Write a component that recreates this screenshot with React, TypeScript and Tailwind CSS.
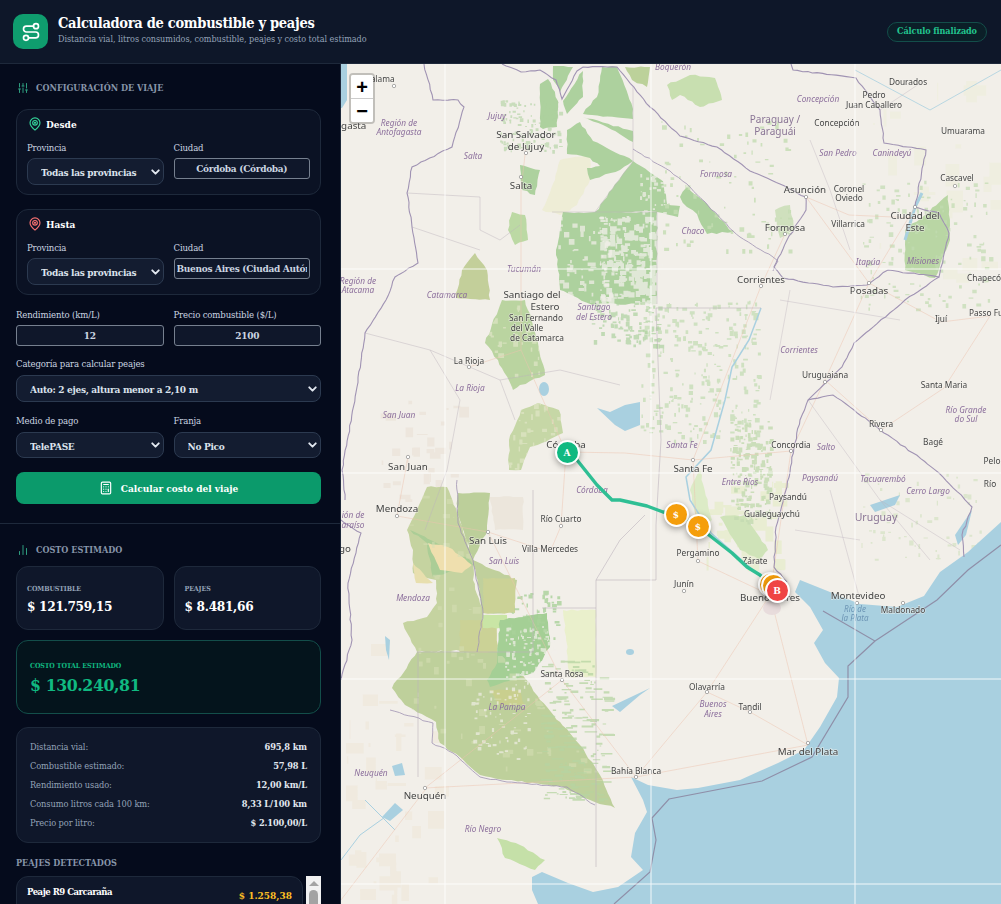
import { Calculator, ChartNoAxesColumn, ChevronDown, Route, SlidersVertical } from 'lucide-react';

type Lbl = [string, number, number, number?];

const BIG = 9.8;
const SM = 8.3;

// city labels: text, x, y, size
const cities: Lbl[] = [
  ['Calama', 380, 82, SM], ['agasta', 351, 129, BIG], ['San Salvador', 526, 138, BIG], ['de Jujuy', 526, 150, BIG],
  ['Salta', 521, 189, BIG], ['Dourados', 908, 85, SM], ['Pedro', 874, 98, SM], ['Juan Caballero', 874, 108, SM],
  ['Concepción', 837, 126, SM], ['Umuarama', 963, 134, SM], ['Cascavel', 957, 181, SM], ['Asunción', 805, 193, BIG],
  ['Coronel', 849, 192, SM], ['Oviedo', 849, 201, SM], ['Villarrica', 848, 227, SM], ['Ciudad del', 915, 219, BIG],
  ['Este', 915, 231, BIG], ['Formosa', 785, 231, BIG], ['Corrientes', 761, 283, BIG], ['Posadas', 869, 294, BIG],
  ['Chapecó', 984, 281, SM], ['Santiago del', 532, 298, BIG], ['Estero', 545, 310, BIG], ['San Fernando', 536, 321, SM],
  ['del Valle', 527, 331, SM], ['de Catamarca', 537, 341, SM], ['La Rioja', 469, 364, SM], ['Ijuí', 941, 322, SM],
  ['Passo Fu', 986, 316, SM], ['Uruguaiana', 825, 378, SM], ['Santa Maria', 944, 388, SM], ['Rivera', 881, 427, SM],
  ['Bagé', 933, 445, SM], ['Córdoba', 566, 448, BIG], ['Concordia', 791, 448, SM], ['Pelo', 992, 464, SM],
  ['Santa Fe', 693, 472, BIG], ['San Juan', 408, 470, BIG], ['Río', 990, 487, SM], ['Paysandú', 788, 500, SM],
  ['Mendoza', 397, 512, BIG], ['Gualeguaychú', 772, 517, SM], ['Río Cuarto', 561, 522, SM], ['San Luis', 488, 544, BIG],
  ['go', 345, 552, BIG], ['Villa Mercedes', 550, 552, SM], ['Pergamino', 698, 556, SM], ['Zárate', 755, 564, SM],
  ['Junín', 684, 587, SM], ['Buenos Aires', 770, 601, BIG], ['Montevideo', 858, 599, BIG], ['Maldonado', 903, 613, SM],
  ['Santa Rosa', 562, 677, SM], ['Olavarría', 707, 690, SM], ['Tandil', 750, 710, SM], ['Mar del Plata', 808, 755, BIG],
  ['Bahía Blanca', 636, 774, SM], ['Neuquén', 425, 799, BIG],
];

// province names, set in italics
const regions: Lbl[] = [
  ['Boquerón', 673, 70], ['Concepción', 818, 102], ['Jujuy', 497, 119], ['Región de', 399, 126], ['Antofagasta', 399, 135],
  ['San Pedro', 838, 156], ['Canindeyú', 892, 156], ['Salta', 473, 159], ['Formosa', 716, 177], ['Chaco', 693, 234],
  ['Itapúa', 868, 265], ['Misiones', 923, 264], ['Tucumán', 524, 272], ['Región de', 358, 284], ['Atacama', 358, 293],
  ['Catamarca', 447, 298], ['Santiago', 594, 310], ['del Estero', 594, 320], ['Corrientes', 799, 353], ['La Rioja', 470, 391],
  ['Río Grande', 966, 413], ['do Sul', 966, 422], ['San Juan', 399, 418], ['Santa Fe', 682, 448], ['Salto', 826, 450],
  ['Entre Ríos', 740, 485], ['Paysandú', 820, 481], ['Tacuarembó', 883, 482], ['Cerro Largo', 928, 494], ['Córdoba', 592, 493],
  ['ión de', 353, 518], ['araíso', 353, 528], ['San Luis', 504, 564], ['Mendoza', 413, 601], ['La Pampa', 507, 710],
  ['Buenos', 713, 707], ['Aires', 713, 717], ['Neuquén', 371, 776], ['Río Negro', 483, 832],
];

const dots: [number, number][] = [
  [394, 86], [526, 153], [521, 177], [806, 197], [785, 234], [761, 286], [869, 283], [408, 457], [566, 458], [693, 460],
  [397, 516], [488, 532], [561, 526], [698, 561], [684, 591], [469, 367], [825, 382], [791, 451], [562, 680], [707, 692],
  [750, 712], [808, 743], [636, 777], [425, 788], [903, 603], [857, 603], [955, 186], [915, 207], [881, 430],
];

const HILLS = '502 300 525 300 538 343 545 375 520 385 513 390 498 360 485 343';
const CORDOBA = '509 440 521 410 538 403 559 410 563 433 542 443 530 447 521 470 509 470';
const MENDOZA = '427 487 447 487 457 513 473 560 473 580 483 613 480 650 417 652 403 623 427 617 437 603 436 580 413 573 413 550 407 530 417 510';
const PAMPA = '392 688 417 652 460 652 497 652 520 670 540 700 580 745 600 775 615 808 590 800 563 787 507 780 480 775 460 757 440 743 436 722 405 705';

// woodland and scrub: colour, outline (pairs of x y in page pixels)
const land: [string, string][] = [
  ['#eeedd6', '560 160 590 155 590 180 577 205 560 215 542 210 555 180'],
  ['#eaf0cc', '563 610 596 610 596 677 570 677'],
  ['#add19e', '540 84 548 79 558 101 557 127 543 129 540 127'],
  ['#add19e', '553 66 573 67 560 92 553 80'],
  ['#add19e', '583 71 563 101 567 114 583 97'],
  ['#add19e', '602 67 617 67 633 109 633 119 583 114 597 97 600 81'],
  ['#add19e', '583 117 633 131 633 142 607 127'],
  ['#add19e', '633 161 663 181 667 204 680 206 678 217 657 212 595 212'],
  ['#add19e', '567 130 580 122 593 141 633 161 620 170 590 180 587 168 600 166 590 158 567 154'],
  ['#add19e', '563 212 595 212 657 212 657 304 590 304 560 290 556 250'],
  ['#add19e', '680 197 687 187 707 204 733 232 707 234 697 214 687 207'],
  ['#c8dfb0', '667 85 690 75 715 78 722 100 700 107 680 95 672 100'],
  ['#bcd19a', '625 67 650 67 647 87 632 80'],
  ['#bcd9a4', '512 212 525 215 528 240 515 245 508 230'],
  ['#add19e', '520 165 540 170 535 195 522 190'],
  // Tucumán and Catamarca hills
  ['#bad4a0', HILLS],
  ['#c6d7a6', CORDOBA],
  ['#c3cf9a', '456 298 462 270 475 253 487 270 490 300'],
  // Mendoza and San Luis
  ['#c5d3a0', MENDOZA],
  ['#bccf9a', '458 493 490 493 487 530 473 560 457 513'],
  ['#ece6dc', '490 497 523 497 523 530 495 530'],
  ['#c0d09c', '473 560 517 580 513 613 483 613'],
  ['#cbd296', '483 578 515 578 515 613 483 613'],
  ['#cbd296', '460 620 497 620 497 655 460 655'],
  ['#c9e5a5', '483 615 507 615 507 628 483 628'],
  ['#abcd96', '410 530 470 560 473 565 433 577 427 543'],
  ['#efdfae', '428 543 448 547 472 565 462 573 440 570'],
  ['#e8dfae', '413 563 433 583 416 583'],
  // La Pampa
  ['#bed09b', PAMPA],
  ['#a4cf95', '500 620 547 613 550 647 533 673 490 687 487 680 497 663'],
  ['#c9cf8e', '490 690 520 690 525 705 500 705'],
  ['#c5e0a8', '497 838 520 845 545 860 535 870 505 858'],
  // Paraná delta and Entre Ríos
  ['#cfe3b8', '720 517 745 515 768 550 760 560 740 550'],
  ['#dcebc6', '690 490 700 470 712 520 700 530'],
  // Misiones and Paraguay east
  ['#b9d6a4', '905 230 925 215 948 195 950 240 935 278 905 270'],
  ['#cfe0bd', '775 210 790 205 795 230 780 238'],
];

// a fixed pseudo-random source, so the picture never changes between runs
function randomFrom(seed: number) {
  let s = seed;
  return () => {
    s = (s * 16807) % 2147483647;
    return s / 2147483647;
  };
}

function speckle(seed: number, n: number, x0: number, y0: number, x1: number, y1: number, mw: number, mh: number = mw) {
  const next = randomFrom(seed);
  let d = '';
  for (let i = 0; i < n; i++) {
    const w = 1 + next() * mw;
    const h = 1 + next() * mh;
    d += `M${(x0 + next() * (x1 - x0)).toFixed(1)} ${(y0 + next() * (y1 - y0)).toFixed(1)}h${w.toFixed(1)}v${h.toFixed(1)}h${(-w).toFixed(1)}z`;
  }
  return d;
}

// roughens a hand-placed outline so that it reads like a real edge on a map
function rough(points: string, amp: number, seed: number, closed = true) {
  const n = points.trim().split(/\s+/).map(Number);
  const pts: [number, number][] = [];
  for (let i = 0; i < n.length; i += 2) pts.push([n[i], n[i + 1]]);
  if (closed) pts.push(pts[0]);
  const next = randomFrom(seed);
  let d = `M${pts[0][0]} ${pts[0][1]}`;
  for (let i = 1; i < pts.length; i++) {
    const [ax, ay] = pts[i - 1];
    const [bx, by] = pts[i];
    const steps = Math.max(1, Math.round(Math.hypot(bx - ax, by - ay) / 5));
    for (let k = 1; k <= steps; k++) {
      const t = k / steps;
      const jx = k === steps ? 0 : (next() - 0.5) * amp * 2;
      const jy = k === steps ? 0 : (next() - 0.5) * amp * 2;
      d += `L${(ax + (bx - ax) * t + jx).toFixed(1)} ${(ay + (by - ay) * t + jy).toFixed(1)}`;
    }
  }
  return closed ? d + 'Z' : d;
}

const borders = [
  '424 64 433 100 458 100 464 107 452 147 412 167 407 193 412 227 418 263 395 277 386 300 365 333 357 387 342 470 345 500',
  '341 520 361 533 348 583 352 640 341 680',
  '502 64 521 72 540 70 556 80 562 99 577 71 583 67 617 67 650 107 680 136 717 147 750 171 780 184 806 197 806 210 787 240 774 267 783 278 833 287 867 285 888 270 939 277 949 233 939 213 915 207 926 150 884 143 880 110 856 78 793 70 791 64',
  '939 277 905 300 854 343 842 367 808 400 800 420 795 443 787 487 776 527 774 567 787 582',
  '808 400 833 395 854 410 880 430 913 453 939 473 972 507 962 535 964 557',
  '633 149 670 171 687 184 733 231 740 237 773 257 778 261 773 271',
  '457 480 458 523 473 560 483 613 477 652',
  '390 710 433 723 432 743 453 753 480 777 507 782 567 787 595 805',
];

function MapDrawing() {
  return (
    <svg viewBox="341 64 660 840" className="block w-[660px] h-[840px] blur-[0.4px]">
      <defs>
        <clipPath id="scrub">
          <path d={rough(MENDOZA, 0.9, 7)} />
          <path d={rough(PAMPA, 0.9, 9)} />
        </clipPath>
        <clipPath id="hills">
          <path d={rough(HILLS, 0.9, 3)} />
          <path d={rough(CORDOBA, 0.9, 5)} />
        </clipPath>
      </defs>
      <rect x="341" y="64" width="660" height="840" fill="#f2efe9" />
      <path d={speckle(53, 40, 345, 640, 440, 900, 18)} fill="#efe8dc" opacity=".8" />
      <path d={speckle(59, 25, 850, 70, 1000, 280, 22)} fill="#eeeedd" opacity=".8" />
      <path d={speckle(61, 40, 700, 480, 780, 560, 14)} fill="#e6ecc8" opacity=".7" />
      <path d={speckle(67, 30, 380, 400, 460, 500, 10)} fill="#ebe3da" opacity=".8" />

      {/* woodland and scrub */}
      {land.map(([fill, pts], i) => (
        <path key={i} d={rough(pts, 0.9, 101 + i * 13)} fill={fill} />
      ))}
      {/* clearings and fringes */}
      <path d={speckle(71, 170, 392, 490, 610, 810, 7)} fill="#d6deb4" opacity=".55" clipPath="url(#scrub)" />
      <path d={speckle(73, 140, 485, 300, 565, 475, 5)} fill="#dfe6c6" opacity=".7" clipPath="url(#hills)" />
      <path d={speckle(7, 240, 600, 216, 657, 304, 6)} fill="#f2efe9" opacity=".75" />
      <path d={speckle(9, 70, 558, 216, 610, 304, 5)} fill="#f2efe9" opacity=".7" />
      <path d={speckle(11, 40, 640, 165, 665, 212, 3)} fill="#f2efe9" opacity=".7" />
      <path d={speckle(13, 90, 660, 120, 790, 250, 4)} fill="#c3dcb2" opacity=".8" />
      <path d={speckle(17, 260, 640, 300, 760, 440, 4)} fill="#bcd9ac" opacity=".65" />
      <path d={speckle(19, 120, 500, 100, 560, 150, 3)} fill="#add19e" opacity=".6" />
      <path d={speckle(23, 180, 730, 420, 770, 520, 4)} fill="#c4dbb2" opacity=".85" />
      <path d={speckle(27, 90, 590, 300, 660, 345, 4)} fill="#add19e" opacity=".7" />
      <path d={speckle(31, 130, 860, 180, 990, 310, 4)} fill="#c2dbb0" opacity=".7" />
      <path d={speckle(41, 60, 860, 470, 980, 560, 4)} fill="#cfe0bd" opacity=".6" />
      <path d={speckle(43, 60, 470, 690, 530, 760, 3)} fill="#f2efe9" opacity=".65" />
      <path d={speckle(47, 120, 505, 625, 555, 690, 3)} fill="#f2efe9" opacity=".7" />
      <path d={speckle(49, 170, 540, 660, 605, 800, 12, 1.5)} fill="#b6d4a2" opacity=".75" />
      <path d={speckle(51, 50, 510, 590, 560, 640, 4)} fill="#a9d19a" opacity=".8" />

      {/* sea, lakes, rivers */}
      <path d="M1001 522L968 552L940 572L924 596L897 607L860 604L830 592L800 580L795 592L810 607L823 630L814 643L825 663L839 678L837 697L820 727L804 750L778 763L740 780L698 788L677 790L648 785L631 777L643 800L647 812L635 833L631 857L643 870L618 887L593 892L568 883L542 872L532 877L532 890L538 904L1001 904Z" fill="#a9d0e0" />
      <path d="M341 64H347V100L342 108L341 108Z" fill="#a9d0e0" />
      <g fill="#a9d0e0">
        <path d="M597 408L610 412L625 405L640 402L640 425L625 431L615 425Z" />
        <ellipse cx="544" cy="389" rx="5" ry="7" />
        <path d="M392 766L402 763L405 775L395 776Z" />
        <path d="M382 817L395 803L403 810L390 821Z" />
        <path d="M385 636L390 640L389 660L386 650Z" />
        <ellipse cx="630" cy="652" rx="4" ry="3" />
        <path d="M612 706L650 688L640 695L620 712Z" />
        <path d="M870 505L900 495L895 505L875 512Z" />
        <path d="M955 535L972 510L966 535L958 545Z" />
      </g>
      <g fill="none" stroke="#a9d0e0">
        <path d="M761 308L749 340L732 367L725 400L711 450L686 477L690 500L711 533L761 577" strokeWidth="1.5" />
        <path d="M922 193L915 207L905 240" strokeWidth="3" />
        <path d="M365 800L395 830M341 860L360 835L395 810" strokeWidth="1" />
        <path d="M855 70L930 110L1001 70" strokeWidth=".8" />
      </g>

      {/* roads */}
      <g fill="none" stroke="#ecc2ae" strokeWidth=".6" opacity=".8">
        <path d="M566 452L625 453L693 460L791 451M693 460L698 561L770 595M566 452L561 526L550 552L488 532L397 516L408 457M488 532L562 680L636 777L808 745M770 595L707 692L636 777M770 595L808 745L750 712L707 692" />
        <path d="M566 452L521 350L521 190L526 146M521 350L469 367M785 234L761 286L693 460M806 197L869 283L915 207M806 197L849 215L915 218M869 283L825 380L791 451L770 595M425 788L562 680M425 788L636 777M341 900L425 790M825 380L881 430L944 388L990 316L941 322L869 283" />
      </g>

      {/* province lines */}
      <g fill="none" stroke="#bdb4bd" strokeWidth=".6">
        <path d="M417 652H533V490M542 608H596M596 580V867M596 580H656V525L661 440L656 308H761M596 580L620 540L645 515M418 652V777" />
        <path d="M633 87V161L595 212H657V304M552 212H595M407 193L480 197L480 230L500 240L520 225M412 227L480 250M365 333L430 350L460 400L447 470L425 530M430 350L500 380L515 420M500 380L560 370L620 385" strokeWidth=".45" />
        <path d="M790 290L770 400M880 110L925 80M810 140L830 190L850 250M780 300L900 320M808 400L880 500L960 550M830 490L860 600M795 530L860 540M880 500L930 560" strokeWidth=".4" />
      </g>

      {/* country lines */}
      <g fill="none" stroke="#a093b3" strokeWidth="1.1">
        {borders.map((pts, i) => (
          <path key={i} d={rough(pts, 0.6, 211 + i * 7, false)} strokeWidth={i > 4 ? 0.8 : 1.1} />
        ))}
      </g>
      <path d="M823 611L875 641L848 666L848 697L812 757L762 781L669 799L652 818L656 840L650 872L614 904M875 641L937 600L968 570L1001 545" fill="none" stroke="#8f8fa8" strokeWidth="1.2" />

      {/* Buenos Aires sprawl */}
      <ellipse cx="772" cy="608" rx="9" ry="7" fill="#e8dcdc" />

      {/* labels */}
      <g className="font-['Noto_Sans',sans-serif]">
        {regions.map(([t, x, y], i) => (
          <text key={i} x={x} y={y} textAnchor="middle" fontSize="8.3" fontStyle="italic" fill="#8c6f9c">{t}</text>
        ))}
        {cities.map(([t, x, y, size], i) => (
          <text key={i} x={x} y={y} textAnchor="middle" fontSize={size} fill="#444" stroke="#f4f1ec" strokeOpacity=".6" strokeWidth="1.4" paintOrder="stroke">{t}</text>
        ))}
        <text x="775" y="123" textAnchor="middle" fontSize="10" fill="#8a7595">Paraguay /</text>
        <text x="775" y="135" textAnchor="middle" fontSize="10" fill="#8a7595">Paraguái</text>
        <text x="876" y="521" textAnchor="middle" fontSize="10.5" fill="#8a7595">Uruguay</text>
        <text x="855" y="612" textAnchor="middle" fontSize="8" fontStyle="italic" fill="#6d95b5">Río de</text>
        <text x="855" y="621" textAnchor="middle" fontSize="8" fontStyle="italic" fill="#6d95b5">la Plata</text>
      </g>
      {dots.map(([x, y], i) => (
        <circle key={i} cx={x} cy={y} r="1.7" fill="#fff" stroke="#7a7a7a" strokeWidth=".6" />
      ))}

      {/* tile seams */}
      <path d="M445 64V904M651 64V904M855 64V904M341 269H1001M341 473H1001M341 679H1001M341 884H1001" stroke="#fff" strokeWidth="1" opacity=".85" />

      {/* route */}
      <path d="M567 452L577 460L597 485L612 500L620 500L647 506L663 512L676 514L698 526L709 535L732 553L747 567L760 575L772 586" fill="none" stroke="#2fbf94" strokeWidth="3.4" strokeLinecap="round" strokeLinejoin="round" />
    </svg>
  );
}

function Marker({ x, y, color, label }: { x: number; y: number; color: string; label: string }) {
  return (
    <div
      className={`absolute w-[25px] h-[25px] -ml-[12.5px] -mt-[12.5px] rounded-full border-2 border-white flex items-center justify-center text-[10px] font-bold text-white shadow-[0_2px_6px_rgba(0,0,0,0.35)] ${color}`}
      style={{ left: x, top: y }}
    >
      {label}
    </div>
  );
}

function PinIcon({ className }: { className: string }) {
  return (
    <svg viewBox="0 0 24 24" className={`w-[14px] h-[14px] ${className}`} fill="none" stroke="currentColor" strokeWidth="2" strokeLinecap="round" strokeLinejoin="round">
      <path d="M20.5 10c0 6-8.5 12.5-8.5 12.5S3.500 16 3.500 10a8.500 8.500 0 0 1 17 0z" />
      <circle cx="12" cy="10" r="4" />
      <circle cx="12" cy="10" r="0.8" fill="currentColor" />
    </svg>
  );
}

function FieldLabel({ children, mb = 'mb-[4px]' }: { children: React.ReactNode; mb?: string }) {
  return <label className={`block text-[9.5px] leading-[12px] tracking-[-0.15px] text-[#cbd5e1] ${mb}`}>{children}</label>;
}

function Select({ value, h = 'h-[27px]', px = 'pl-[13px]' }: { value: string; h?: string; px?: string }) {
  return (
    <div className="relative">
      <select
        defaultValue={value}
        className={`block w-full appearance-none rounded-lg border border-[#2c3a50] bg-[#131c30] pr-[18px] pt-[2px] text-[10px] font-bold text-[#dbe2ec] tracking-[-0.3px] ${h} ${px}`}
      >
        <option>{value}</option>
      </select>
      <ChevronDown size={13} strokeWidth={3.5} className="absolute right-[2px] top-1/2 -translate-y-1/2 text-[#e2e8f0]" />
    </div>
  );
}

function TextBox({ value, center = true }: { value: string; center?: boolean }) {
  return (
    <input
      readOnly
      value={value}
      className={`block w-full h-[21px] rounded-[3px] border border-[#76808f] bg-[#0f172a] px-[2px] text-[10px] font-bold text-[#cbd5e1] tracking-[-0.3px] ${center ? 'text-center' : 'text-left'}`}
    />
  );
}

function PlacePanel({ title, iconClass, city, center }: { title: string; iconClass: string; city: string; center: boolean }) {
  return (
    <div className="rounded-xl border border-[#1e293b] bg-[#0b1224] h-[86px] pt-[7px] px-[10px]">
      <div className="flex items-center gap-[4px] h-[14px] mb-[11px] pl-[1px]">
        <PinIcon className={iconClass} />
        <span className="text-[10px] font-bold text-white">{title}</span>
      </div>
      <div className="grid grid-cols-2 gap-[10px]">
        <div>
          <FieldLabel>Provincia</FieldLabel>
          <Select value="Todas las provincias" />
        </div>
        <div>
          <FieldLabel>Ciudad</FieldLabel>
          <TextBox value={city} center={center} />
        </div>
      </div>
    </div>
  );
}

function SectionTitle({ icon, children }: { icon: React.ReactNode; children: React.ReactNode }) {
  return (
    <div className="flex items-center gap-[7px] h-[12px] pl-[1px]">
      {icon}
      <h2 className="translate-y-px text-[9px] font-bold uppercase text-[#8795a9]">{children}</h2>
    </div>
  );
}

const details = [
  ['Distancia vial:', '695,8 km'],
  ['Combustible estimado:', '57,98 L'],
  ['Rendimiento usado:', '12,00 km/L'],
  ['Consumo litros cada 100 km:', '8,33 L/100 km'],
  ['Precio por litro:', '$ 2.100,00/L'],
];

export default function App() {
  return (
    <div className="h-[904px] w-[1001px] overflow-hidden flex flex-col bg-[#050b1c] font-['DejaVu_Serif_Condensed','DejaVu_Serif',serif]">
      {/* Header */}
      <header className="h-[64px] shrink-0 flex items-center justify-between bg-[#0e1729] border-b border-[#1e293b] pl-[13px] pr-[14px]">
        <div className="flex items-center gap-[10px]">
          <div className="w-[35px] h-[35px] rounded-[10px] bg-[#0f9d6e] flex items-center justify-center">
            <Route size={20} className="text-white" />
          </div>
          <div className="-mt-[5px]">
            <h1 className="text-[14.5px] leading-[19px] font-bold tracking-[-0.3px] text-white">Calculadora de combustible y peajes</h1>
            <p className="mt-[1px] text-[9px] leading-[13px] tracking-[-0.05px] text-[#94a3b8]">Distancia vial, litros consumidos, combustible, peajes y costo total estimado</p>
          </div>
        </div>
        <span className="rounded-full border border-[#134e4a] bg-[#0b1f28] w-[100px] h-[20px] flex items-center justify-center text-[9px] tracking-[-0.1px] font-bold text-[#22c58f]">
          Cálculo finalizado
        </span>
      </header>

      <div className="flex flex-1 min-h-0">
        {/* Sidebar */}
        <aside className="w-[341px] shrink-0 overflow-hidden border-r border-[#1e293b] bg-[#050b1c]">
          <div className="pl-4 pr-[19px] pt-[18px] pb-[19px]">
            <SectionTitle icon={<SlidersVertical size={12} className="text-[#2e9c7e]" />}>Configuración de viaje</SectionTitle>

            <div className="mt-[15px] space-y-[14px]">
              <PlacePanel title="Desde" iconClass="text-[#34d399]" city="Córdoba (Córdoba)" center />
              <PlacePanel title="Hasta" iconClass="text-[#f87171]" city="Buenos Aires (Ciudad Autónoma de Buenos Aires)" center={false} />
            </div>

            <div className="mt-[14px] grid grid-cols-2 gap-[10px]">
              <div>
                <FieldLabel>Rendimiento (km/L)</FieldLabel>
                <TextBox value="12" />
              </div>
              <div>
                <FieldLabel>Precio combustible ($/L)</FieldLabel>
                <TextBox value="2100" />
              </div>
            </div>

            <div className="mt-[12px]">
              <FieldLabel mb="mb-[5px]">Categoría para calcular peajes</FieldLabel>
              <Select value="Auto: 2 ejes, altura menor a 2,10 m" />
            </div>

            <div className="mt-[13px] grid grid-cols-2 gap-[10px]">
              <div>
                <FieldLabel mb="mb-[5px]">Medio de pago</FieldLabel>
                <Select value="TelePASE" h="h-[26px]" />
              </div>
              <div>
                <FieldLabel mb="mb-[5px]">Franja</FieldLabel>
                <Select value="No Pico" h="h-[26px]" />
              </div>
            </div>

            <button className="mt-[14px] w-full h-[32px] rounded-lg bg-[#0b9a6b] flex items-center justify-center gap-[8px] text-[10px] font-bold text-white">
              <Calculator size={14} />
              Calcular costo del viaje
            </button>
          </div>

          <div className="border-t border-[#1e293b] pl-4 pr-[19px] pt-[20px]">
            <SectionTitle icon={<ChartNoAxesColumn size={12} className="text-[#2e9c7e]" />}>Costo estimado</SectionTitle>

            <div className="mt-[10px] grid grid-cols-2 gap-[10px]">
              <div className="h-[64px] rounded-xl border border-[#1e293b] bg-[#0f172a] pl-[10px] pt-[17px]">
                <p className="text-[7px] leading-[10px] font-bold uppercase tracking-[-0.1px] text-[#94a3b8]">Combustible</p>
                <p className="mt-[3px] text-[13.5px] leading-[18px] font-bold tracking-[-0.3px] text-white">$ 121.759,15</p>
              </div>
              <div className="h-[64px] rounded-xl border border-[#1e293b] bg-[#0f172a] pl-[10px] pt-[17px]">
                <p className="text-[7px] leading-[10px] font-bold uppercase tracking-[-0.1px] text-[#94a3b8]">Peajes</p>
                <p className="mt-[3px] text-[13.5px] leading-[18px] font-bold tracking-[-0.3px] text-white">$ 8.481,66</p>
              </div>
            </div>

            <div className="mt-[10px] h-[74px] rounded-xl border border-[#134e4a] bg-[#04141c] pl-[13px] pt-[20px]">
              <p className="text-[7px] leading-[10px] font-bold uppercase tracking-[-0.1px] text-[#10b981]">Costo total estimado</p>
              <p className="mt-[2px] text-[17.5px] leading-[25px] font-bold tracking-[-0.4px] text-[#10b981]">$ 130.240,81</p>
            </div>

            <div className="mt-[13px] h-[116px] rounded-xl border border-[#1e293b] bg-[#0f172a] px-[13px] pt-[9px]">
              {details.map(([k, v]) => (
                <div key={k} className="flex items-center justify-between h-[19px] text-[9.2px] tracking-[-0.1px]">
                  <span className="text-[#94a3b8]">{k}</span>
                  <span className="font-bold text-[#e2e8f0]">{v}</span>
                </div>
              ))}
            </div>

            <h3 className="mt-[13px] translate-y-px text-[9px] leading-[12px] font-bold uppercase text-[#8795a9]">Peajes detectados</h3>

            <div className="mt-[8px] flex gap-[3px]">
              <div className="flex-1 h-[60px] rounded-xl border border-[#1e293b] bg-[#0f172a] px-[10px] pt-[8px] flex justify-between">
                <span className="text-[9.5px] font-bold tracking-[-0.5px] text-white">Peaje R9 Carcaraña</span>
                <span className="text-[10px] font-bold text-[#fbbf24] mt-[3px]">$ 1.258,38</span>
              </div>
              <div className="w-[15px] h-[60px] bg-[#f1f1f1] flex flex-col items-center pt-[5px]">
                <div className="w-0 h-0 border-x-[5px] border-x-transparent border-b-[5px] border-b-[#a3a3a3]" />
                <div className="mt-[4px] w-[9px] h-[40px] rounded-full bg-[#a3a3a3]" />
              </div>
            </div>
          </div>
        </aside>

        {/* Map */}
        <main className="relative flex-1 overflow-hidden bg-[#f2efe9]">
          <MapDrawing />
          <div className="absolute left-[8px] top-[9px] w-[26px] rounded-[4px] border-2 border-black/20 bg-clip-padding font-['Liberation_Sans',sans-serif]">
            <div className="h-[24px] bg-white rounded-t-[2px] border-b border-[#ccc] flex items-center justify-center text-[20px] font-bold leading-none text-black">+</div>
            <div className="h-[23px] bg-white rounded-b-[2px] flex items-center justify-center text-[20px] font-bold leading-none text-black">−</div>
          </div>
          {/* markers, in map coordinates */}
          <Marker x={226} y={388} color="bg-[#10b981]" label="A" />
          <Marker x={335} y={450} color="bg-[#f59e0b]" label="$" />
          <Marker x={357} y={462} color="bg-[#f59e0b]" label="$" />
          <Marker x={429} y={520} color="bg-[#f59e0b]" label="$" />
          <Marker x={432} y={521} color="bg-[#f59e0b]" label="$" />
          <Marker x={436} y={526} color="bg-[#ef4444]" label="B" />
        </main>
      </div>
    </div>
  );
}
